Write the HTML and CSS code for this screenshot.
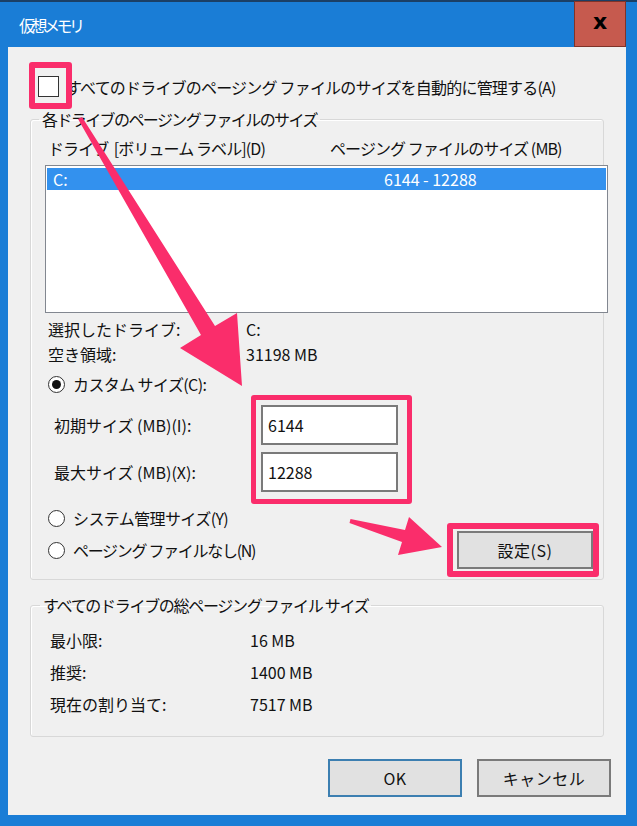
FILE: index.html
```html
<!DOCTYPE html>
<html lang="ja">
<head>
    <meta charset="UTF-8">
    <title>仮想メモリ</title>
    <link rel="stylesheet" href="styles.css">
</head>
<body>
    <div class="window">
        <div class="titlebar">
            <span class="title">仮想メモリ</span>
            <span class="close">x</span>
        </div>
        <div class="client">
            <label class="check-row">
                <span class="checkbox"></span>
                <span>すべてのドライブのページング ファイルのサイズを自動的に管理する(A)</span>
            </label>

            <fieldset class="group group-drive">
                <legend>各ドライブのページング ファイルのサイズ</legend>
                <div class="list-head">
                    <span class="col-drive">ドライブ&nbsp; [ボリューム ラベル](D)</span>
                    <span>ページング ファイルのサイズ (MB)</span>
                </div>
                <div class="listbox">
                    <div class="list-row selected">
                        <span class="col-drive">C:</span>
                        <span class="col-size">6144 - 12288</span>
                    </div>
                </div>
                <div class="info">
                    <div class="info-row"><span class="info-label">選択したドライブ:</span><span>C:</span></div>
                    <div class="info-row"><span class="info-label">空き領域:</span><span>31198 MB</span></div>
                </div>

                <div class="radio-row custom"><span class="radio checked"></span>カスタム サイズ(C):</div>
                <div class="sizes">
                    <div class="size-row">
                        <span class="size-label">初期サイズ (MB)(I):</span>
                        <span class="textbox">6144</span>
                    </div>
                    <div class="size-row">
                        <span class="size-label">最大サイズ (MB)(X):</span>
                        <span class="textbox">12288</span>
                    </div>
                </div>

                <div class="bottom-row">
                    <div class="radios">
                        <div class="radio-row"><span class="radio"></span>システム管理サイズ(Y)</div>
                        <div class="radio-row tight"><span class="radio"></span>ページング ファイルなし(N)</div>
                    </div>
                    <button class="btn btn-set">設定(S)</button>
                </div>
            </fieldset>

            <fieldset class="group group-total">
                <legend>すべてのドライブの総ページング ファイル サイズ</legend>
                <div class="total-row"><span class="total-label">最小限:</span><span>16 MB</span></div>
                <div class="total-row"><span class="total-label">推奨:</span><span>1400 MB</span></div>
                <div class="total-row"><span class="total-label">現在の割り当て:</span><span>7517 MB</span></div>
            </fieldset>

            <div class="actions">
                <button class="btn btn-ok">OK</button>
                <button class="btn">キャンセル</button>
            </div>
        </div>

        <!-- annotations -->
        <div class="mark mark-check"></div>
        <div class="mark mark-inputs"></div>
        <div class="mark mark-set"></div>
        <svg class="arrows" width="637" height="826" viewBox="0 0 637 826">
            <polygon points="82,117 215,326 237,313 242,386 180,348 201,335 78,119" />
            <polygon points="350.5,519 405,530 409,517 442,547 398,555 402,542 349.5,523" />
        </svg>
    </div>
</body>
</html>
```

FILE: styles.css
```css
body {
    margin: 0;
    font-family: "Noto Sans CJK JP", "Noto Sans", sans-serif;
    font-size: 16px;
    color: #111;
}
.window {
    position: relative;
    width: 637px;
    height: 826px;
    background: #1a7dd6;
    border-top: 2px solid #1b3f66;
    box-sizing: border-box;
}
.titlebar {
    height: 45px;
    display: flex;
    align-items: center;
}
.title {
    color: #fff;
    font-size: 16px;
    margin-left: 19px;
    letter-spacing: -3.5px;
}
.close {
    margin-left: auto;
    margin-right: 11px;
    margin-top: -2px;
    width: 52px;
    height: 46px;
    background: #c65a4e;
    border: 1px solid #7f3329;
    display: flex;
    justify-content: center;
    align-items: center;
    font-family: "DejaVu Sans", sans-serif;
    font-weight: bold;
    font-size: 22px;
    color: #000;
    padding-bottom: 4px;
    box-sizing: border-box;
}
.client {
    margin-left: 8px;
    width: 618px;
    height: 768px;
    background: #f0f0f0;
    box-sizing: border-box;
    padding-top: 29px;
    padding-left: 22px;
}
.check-row {
    display: flex;
    align-items: center;
    height: 21px;
    gap: 7px;
    padding-left: 8px;
    letter-spacing: -0.8px;
}
.checkbox {
    width: 19px;
    height: 19px;
    border: 1px solid #333;
    background: #fff;
    flex: none;
}
.group {
    margin: 12px 0 0 0;
    width: 574px;
    box-sizing: border-box;
    border: 1px solid #d8d8d8;
    border-radius: 3px;
    box-shadow: inset 1px 1px 0 #fff;
    padding: 0;
    min-width: 0;
}
.group legend {
    padding: 0 3px;
    line-height: 20px;
}
.group-drive {
    padding: 0 0 10px 14px;
}
.group-drive legend {
    margin-left: -6px;
    letter-spacing: -1.6px;
}
.list-head {
    display: flex;
    margin-top: 9px;
    line-height: 20px;
    padding-left: 3px;
    letter-spacing: -0.9px;
}
.col-drive {
    width: 282px;
    flex: none;
}
.listbox {
    margin-top: 7px;
    margin-right: -5px;
    height: 148px;
    box-sizing: border-box;
    background: #fff;
    border: 1px solid #828790;
    padding: 2px 1px;
}
.list-row {
    display: flex;
    height: 22px;
    align-items: center;
    padding-left: 6px;
    color: #fff;
}
.list-row.selected {
    background: #3391ee;
}
.list-row .col-drive {
    width: 331px;
}
.info {
    margin-top: 4px;
}
.info-row {
    display: flex;
    line-height: 25px;
    padding-left: 3px;
}
.info-label {
    width: 198px;
    flex: none;
}
.radio-row {
    display: flex;
    align-items: center;
    gap: 8px;
    height: 20px;
    padding-left: 3px;
    letter-spacing: -0.6px;
}
.radio-row.custom {
    margin-top: 7px;
}
.radio-row.tight {
    letter-spacing: -1.3px;
}
.radio {
    width: 15px;
    height: 15px;
    border: 1px solid #333;
    border-radius: 50%;
    background: #fff;
    flex: none;
    display: flex;
    justify-content: center;
    align-items: center;
}
.radio.checked::after {
    content: "";
    width: 9px;
    height: 9px;
    border-radius: 50%;
    background: #111;
}
.sizes {
    display: flex;
    flex-direction: column;
    gap: 7px;
    margin-top: 11px;
}
.size-row {
    display: flex;
    align-items: center;
    height: 40px;
    padding-left: 9px;
}
.size-label {
    width: 207px;
    flex: none;
}
.textbox {
    width: 137px;
    height: 40px;
    box-sizing: border-box;
    border: 2px solid #7a7a7a;
    background: #fff;
    padding: 7px 0 0 5px;
    line-height: 22px;
}
.bottom-row {
    display: flex;
    margin-top: 16px;
}
.radios {
    display: flex;
    flex-direction: column;
    gap: 12px;
}
.btn {
    font-family: inherit;
    font-size: 16px;
    color: #111;
    background: #e1e1e1;
    border: 2px solid #7a7a7a;
    width: 134px;
    height: 38px;
    padding: 0;
    letter-spacing: 0.5px;
}
.btn-set {
    margin-left: auto;
    margin-right: 10px;
    margin-top: 23px;
    width: 136px;
}
.group-total {
    margin-top: 15px;
    padding: 9px 0 16px 19px;
}
.group-total legend {
    margin-left: -10px;
    letter-spacing: -1.3px;
}
.total-row {
    display: flex;
    line-height: 32px;
}
.total-label {
    width: 200px;
    flex: none;
}
.actions {
    display: flex;
    justify-content: flex-end;
    gap: 15px;
    margin-top: 22px;
    margin-right: 15px;
}
.btn-ok {
    border-color: #3c7fb1;
}
.mark {
    position: absolute;
    border: 6px solid #fa2d6b;
    border-radius: 3px;
    box-sizing: border-box;
}
.mark-check {
    left: 29px;
    top: 60px;
    width: 43px;
    height: 47px;
}
.mark-inputs {
    left: 251px;
    top: 393px;
    width: 161px;
    height: 109px;
    border-width: 5px;
}
.mark-set {
    left: 447px;
    top: 521px;
    width: 152px;
    height: 54px;
}
.arrows {
    position: absolute;
    left: 0;
    top: -2px;
    pointer-events: none;
}
.arrows polygon {
    fill: #fa2d6b;
}
```
